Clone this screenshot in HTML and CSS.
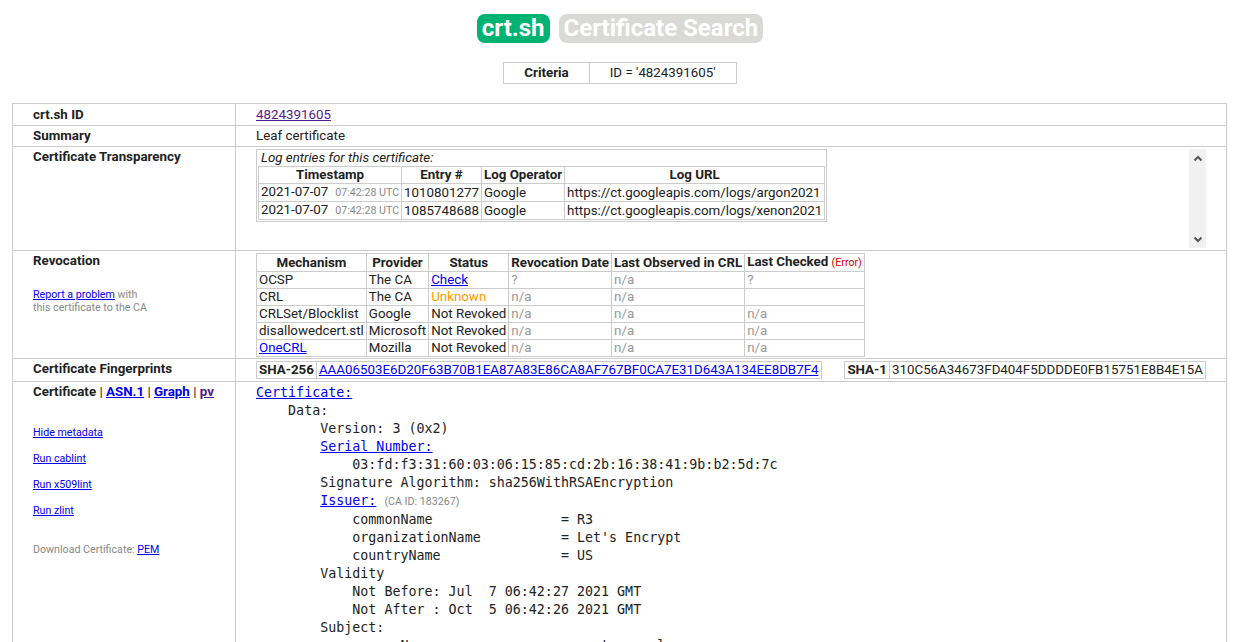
FILE: index.html
```html
<!DOCTYPE html>
<html>
<head>
<meta charset="utf-8">
<title>crt.sh | 4824391605</title>
<link rel="stylesheet" href="styles.css">
</head>
<body>
<div class="page">
  <div class="title-row"><span class="title green">crt.sh</span><span class="title grey">Certificate Search</span></div>
  <table class="criteria"><tr><th>Criteria</th><td>ID = '4824391605'</td></tr></table>

  <table class="outer">
    <tr class="first-row"><th>crt.sh ID</th><td><a class="visited" href="#">4824391605</a></td></tr>
    <tr><th>Summary</th><td>Leaf certificate</td></tr>
    <tr>
      <th>Certificate Transparency</th>
      <td>
        <div class="scrollbox">
          <div class="scroll-content">
            <div class="box">
              <div class="caption">Log entries for this certificate:</div>
              <table class="inner">
                <tr><th>Timestamp</th><th>Entry #</th><th>Log Operator</th><th>Log URL</th></tr>
                <tr><td>2021-07-07<span class="small time">07:42:28 UTC</span></td><td>1010801277</td><td>Google</td><td>https://ct.googleapis.com/logs/argon2021</td></tr>
                <tr><td>2021-07-07<span class="small time">07:42:28 UTC</span></td><td>1085748688</td><td>Google</td><td>https://ct.googleapis.com/logs/xenon2021</td></tr>
              </table>
            </div>
          </div>
          <div class="scrollbar">
            <svg width="10" height="7" viewBox="0 0 10 7"><path d="M1.5 5.5 L5 2 L8.5 5.5" fill="none" stroke="#555" stroke-width="2"/></svg>
            <svg width="10" height="7" viewBox="0 0 10 7"><path d="M1.5 1.5 L5 5 L8.5 1.5" fill="none" stroke="#555" stroke-width="2"/></svg>
          </div>
        </div>
      </td>
    </tr>
    <tr class="revo-row">
      <th>Revocation
        <div class="report"><a href="#">Report a problem</a> with<br>this certificate to the CA</div>
      </th>
      <td>
        <table class="inner revo">
          <tr><th>Mechanism</th><th>Provider</th><th>Status</th><th>Revocation Date</th><th>Last Observed in CRL</th><th>Last Checked <span class="small error">(Error)</span></th></tr>
          <tr><td>OCSP</td><td>The CA</td><td><a href="#">Check</a></td><td class="na">?</td><td class="na">n/a</td><td class="na">?</td></tr>
          <tr><td>CRL</td><td>The CA</td><td class="unknown">Unknown</td><td class="na">n/a</td><td class="na">n/a</td><td></td></tr>
          <tr><td>CRLSet/Blocklist</td><td>Google</td><td>Not Revoked</td><td class="na">n/a</td><td class="na">n/a</td><td class="na">n/a</td></tr>
          <tr><td>disallowedcert.stl</td><td>Microsoft</td><td>Not Revoked</td><td class="na">n/a</td><td class="na">n/a</td><td class="na">n/a</td></tr>
          <tr><td><a href="#">OneCRL</a></td><td>Mozilla</td><td>Not Revoked</td><td class="na">n/a</td><td class="na">n/a</td><td class="na">n/a</td></tr>
        </table>
      </td>
    </tr>
    <tr>
      <th>Certificate Fingerprints</th>
      <td>
        <div class="fps">
          <table class="fp"><tr><th>SHA-256</th><td><a href="#">AAA06503E6D20F63B70B1EA87A83E86CA8AF767BF0CA7E31D643A134EE8DB7F4</a></td></tr></table>
          <table class="fp"><tr><th>SHA-1</th><td>310C56A34673FD404F5DDDDE0FB15751E8B4E15A</td></tr></table>
        </div>
      </td>
    </tr>
    <tr>
      <th>
        <div class="cert-links">Certificate <span class="sep">|</span> <a href="#">ASN.1</a> <span class="sep">|</span> <a href="#">Graph</a> <span class="sep">|</span> <a class="visited" href="#">pv</a></div>
        <div class="tools">
          <a class="tool" href="#">Hide metadata</a>
          <a class="tool" href="#">Run cablint</a>
          <a class="tool" href="#">Run x509lint</a>
          <a class="tool" href="#">Run zlint</a>
          <div class="download">Download Certificate: <a href="#">PEM</a></div>
        </div>
      </th>
      <td>
<pre class="cert"><a href="#">Certificate:</a>
    Data:
        Version: 3 (0x2)
        <a href="#">Serial Number:</a>
            03:fd:f3:31:60:03:06:15:85:cd:2b:16:38:41:9b:b2:5d:7c
        Signature Algorithm: sha256WithRSAEncryption
        <a href="#">Issuer:</a> <span class="caid">(CA ID: 183267)</span>
            commonName                = R3
            organizationName          = Let's Encrypt
            countryName               = US
        Validity
            Not Before: Jul  7 06:42:27 2021 GMT
            Not After : Oct  5 06:42:26 2021 GMT
        Subject:
            commonName                = cert.example.org
        Subject Public Key Info:
            Public Key Algorithm: rsaEncryption</pre>
      </td>
    </tr>
  </table>
</div>
</body>
</html>
```

FILE: styles.css
```css
body {
  margin: 8px;
  font-family: Roboto, "Liberation Sans", Arial, sans-serif;
  font-size: 13.333px;
  color: #222222;
  background: #ffffff;
}

a { color: #0000ee; }
a.visited { color: #551a8b; }

.page { width: 1224px; }

.title-row {
  display: flex;
  justify-content: center;
  gap: 9px;
  margin-top: 6px;
}

.title {
  color: #ffffff;
  font-weight: bold;
  font-size: 24px;
  line-height: 29px;
  padding: 0 5px;
  border-radius: 8px;
}

.green { background: #00b373; }
.grey { background: #d9d9d6; }

table { border-collapse: collapse; }

.criteria {
  margin: 19px auto 0;
  border: 1px solid #cccccc;
}

.criteria th,
.criteria td {
  border: 1px solid #cccccc;
  padding: 2px 20px;
  line-height: 16px;
}

.outer {
  margin: 19px 0 0 4px;
  width: 1215px;
  border: 1px solid #cccccc;
}

.outer > tbody > tr > th,
.outer > tbody > tr > td {
  border: 1px solid #cccccc;
  padding: 2px 20px;
  vertical-align: top;
  text-align: left;
  line-height: 16px;
}

.outer > tbody > tr > th { width: 182px; }

.outer > tbody > tr.first-row > th,
.outer > tbody > tr.first-row > td { padding-top: 3px; }

.outer > tbody > tr.revo-row > td { padding-bottom: 1px; }

.scrollbox {
  display: flex;
  height: 99px;
}

.scroll-content {
  flex: 1;
  overflow: hidden;
}

.scrollbar {
  width: 17px;
  background: #f1f1f1;
  display: flex;
  flex-direction: column;
  justify-content: space-between;
  align-items: center;
  padding: 6px 0 5px;
  box-sizing: border-box;
}

.scrollbar svg { display: block; }

.box {
  display: inline-block;
  border: 1px solid #cccccc;
  padding: 0 1px 1px;
}

.caption {
  font-style: italic;
  line-height: 16px;
  padding-left: 3px;
}

.inner th,
.inner td {
  border: 1px solid #cccccc;
  padding: 0 2px;
  line-height: 16px;
  white-space: nowrap;
  text-align: left;
}

.inner th { text-align: center; }

.revo { border: 1px solid #cccccc; }

.small { font-size: 10.667px; }

.time {
  color: #888888;
  margin-left: 7px;
}

.error { color: #e00000; font-weight: normal; }

.na { color: #999999; }

.unknown { color: #fe9a00; }

.report {
  font-weight: normal;
  font-size: 10.667px;
  line-height: 13px;
  color: #888888;
  margin-top: 19px;
}

.fps {
  display: flex;
  justify-content: space-between;
}

.fp { border: 1px solid #cccccc; }

.fp th,
.fp td {
  border: 1px solid #cccccc;
  padding: 0 2px;
  line-height: 16px;
  white-space: nowrap;
}

.cert-links a { font-weight: bold; }
.sep { font-weight: normal; }

.tools {
  font-weight: normal;
  font-size: 10.667px;
  line-height: 13px;
  margin-top: 26px;
}

.tool {
  display: block;
  width: max-content;
  margin-bottom: 13px;
}

.download {
  color: #888888;
  margin-top: 26px;
}

.cert {
  margin: 0;
  font-family: "DejaVu Sans Mono", "Liberation Mono", monospace;
  font-size: 13.333px;
  line-height: 18px;
  color: #222222;
}

.caid {
  font-family: Roboto, "Liberation Sans", Arial, sans-serif;
  font-size: 10.667px;
  color: #888888;
}
```
